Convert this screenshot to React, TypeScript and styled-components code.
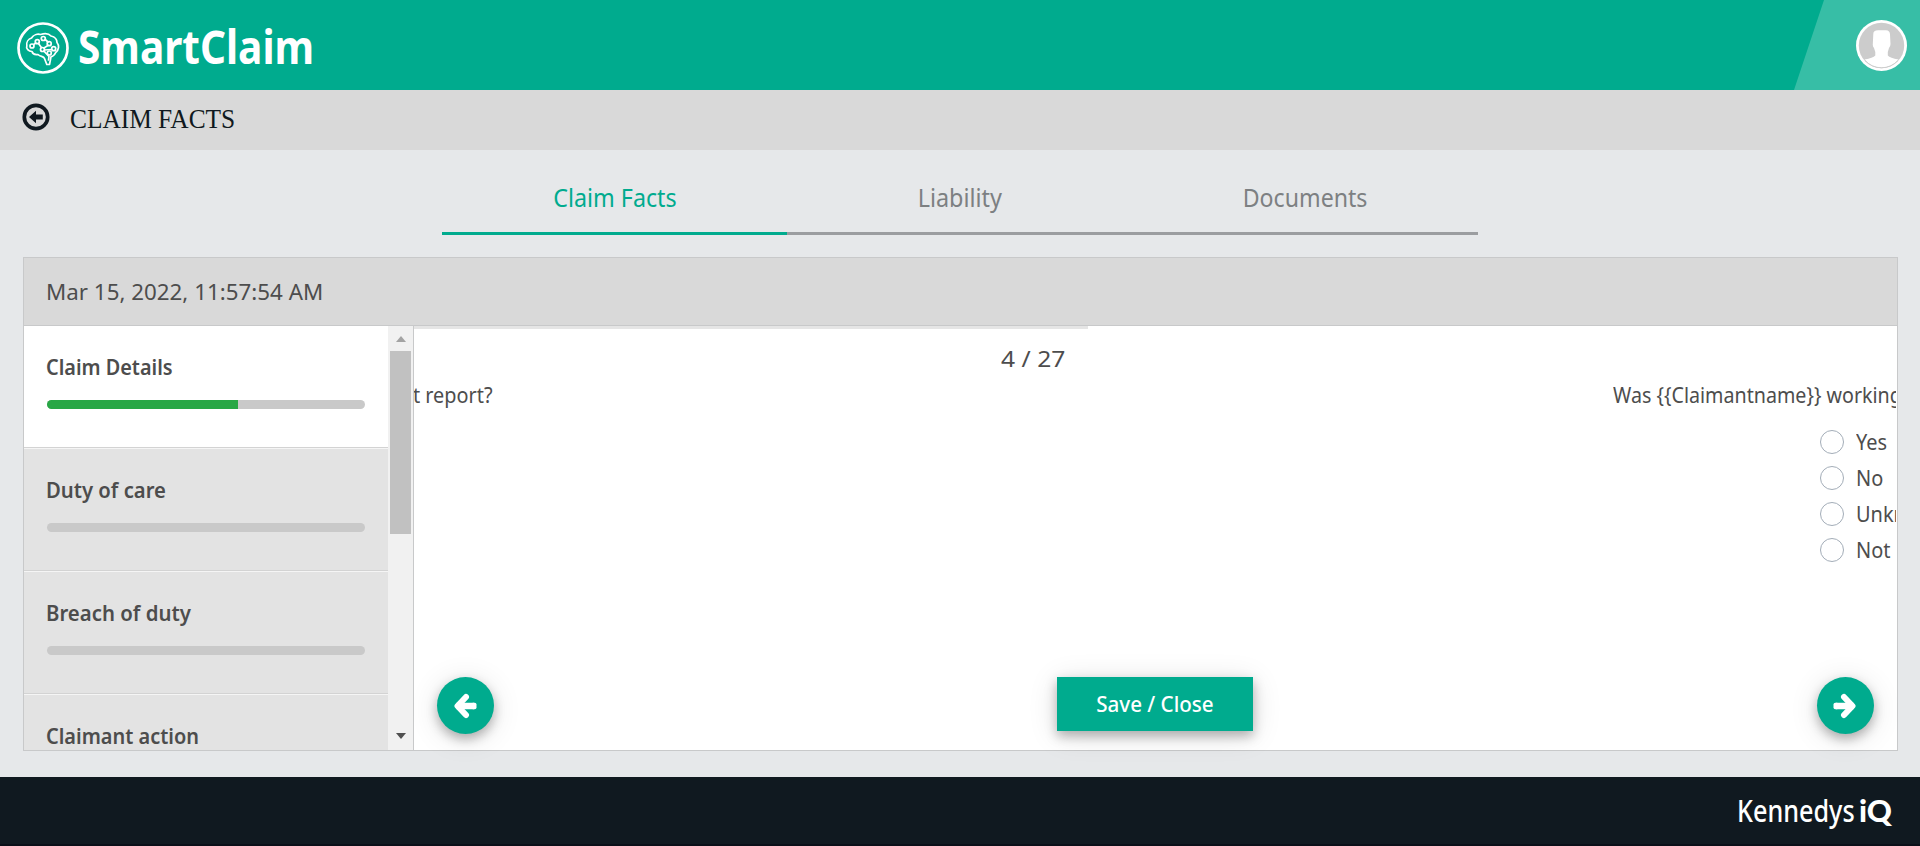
import React from 'react';
import styled, { createGlobalStyle, css } from 'styled-components';

const GREEN = '#00ab8e';
const SANS = '"Noto Sans", "Open Sans", sans-serif';

const GlobalStyle = createGlobalStyle`
  * { box-sizing: border-box; }
  body { margin: 0; background: #e6e8ea; font-family: ${SANS}; color: #4d4d4d; overflow: hidden; }
`;

const Page = styled.div`
  height: 846px;
  display: flex;
  flex-direction: column;
`;

/* Text set slightly narrower or wider than the face's natural width */
const Narrow = styled.span<{ $x: number; $from?: string }>`
  display: inline-block;
  white-space: pre;
  transform: scaleX(${(p) => p.$x});
  transform-origin: ${(p) => p.$from ?? 'left'} center;
`;

const Header = styled.header`
  height: 90px;
  flex: none;
  display: flex;
  justify-content: space-between;
  background: ${GREEN};
`;

const Brand = styled.div`
  display: flex;
  align-items: center;
  padding: 4px 0 0 16px;
  gap: 8px;
  color: #fff;
  svg { flex: none; margin-top: 2px; }
`;

const BrandName = styled.div`
  font-size: 46px;
  font-weight: 700;
  line-height: 60px;
  height: 60px;
  margin-top: -2px;
`;

const UserCorner = styled.div`
  width: 126px;
  display: flex;
  justify-content: flex-end;
  padding: 20px 13px 0 0;
  background: #37bea6;
  clip-path: polygon(30px 0, 100% 0, 100% 100%, 0 100%);
`;

const TitleBar = styled.div`
  height: 60px;
  flex: none;
  display: flex;
  align-items: center;
  padding: 0 22px;
  gap: 20px;
  background: #d9d9d9;
  color: #101920;
  svg { margin-top: -6px; }
`;

const Title = styled.h1`
  margin: -3px 0 0;
  font: 400 27px/40px "Liberation Serif", serif;
`;

const Tabs = styled.nav`
  display: flex;
  width: 1036px;
  height: 85px;
  flex: none;
  margin-left: 442px;
`;

const Tab = styled.div<{ $active?: boolean }>`
  flex: 1;
  text-align: center;
  padding-top: 27px;
  font-size: 26px;
  line-height: 40px;
  color: ${(p) => (p.$active ? GREEN : '#7d8082')};
  border-bottom: 3px solid ${(p) => (p.$active ? GREEN : '#9b9da0')};
`;

const Panel = styled.main`
  flex: none;
  height: 494px;
  margin: 22px 22px 0 23px;
  border: 1px solid #c8c9ca;
  display: flex;
  flex-direction: column;
`;

const PanelHead = styled.div`
  height: 68px;
  flex: none;
  padding-left: 22px;
  background: #d9d9d9;
  border-bottom: 1px solid #c8c9ca;
  font-size: 22px;
  line-height: 66px;
`;

const PanelBody = styled.div`
  flex: 1;
  min-height: 0;
  display: flex;
  background: #fff;
`;

const Sidebar = styled.aside`
  width: 390px;
  flex: none;
  display: flex;
  border-right: 1px solid #c8c9ca;
`;

const Sections = styled.div`
  width: 364px;
  overflow: hidden;
  background: #e3e3e3;
`;

const Section = styled.div<{ $active?: boolean }>`
  padding: 27px 23px 38px;
  border-bottom: 1px solid #d3d3d3;
  ${(p) =>
    p.$active
      ? css`background: #fff;`
      : css`border-top: 1px solid #f5f5f5;`}
`;

const SectionName = styled.div`
  font-size: 21px;
  font-weight: 600;
  line-height: 28px;
  height: 28px;
  margin: 0 0 19px -1px;
`;

const Track = styled.div`
  height: 9px;
  border-radius: 4.5px;
  background: #c9c9c9;
  overflow: hidden;
`;

const Fill = styled.div<{ $pct: number }>`
  height: 100%;
  width: ${(p) => p.$pct}%;
  background: #28a745;
`;

const ScrollBar = styled.div`
  width: 25px;
  display: flex;
  flex-direction: column;
  align-items: center;
  justify-content: space-between;
  background: #f1f1f1;
  padding: 10px 0 11px;
`;

const ScrollThumb = styled.div`
  width: 21px;
  height: 183px;
  margin: 9px 0 auto;
  background: #c1c1c1;
`;

const ScrollArrow = styled.div<{ $down?: boolean }>`
  border: 5.5px solid transparent;
  ${(p) =>
    p.$down
      ? css`border-top: 6px solid #505050; border-bottom: 0;`
      : css`border-bottom: 6px solid #a3a3a3; border-top: 0;`}
`;

const Content = styled.section`
  flex: 1;
  min-width: 0;
  display: flex;
  flex-direction: column;
`;

const Counter = styled.div`
  width: 674px;
  flex: none;
  border-top: 3px solid #e5e5e5;
  padding: 12px 23px 0 0;
  text-align: right;
  font-size: 22px;
  line-height: 34px;
  height: 53px;
`;

const Slides = styled.div`
  flex: 1;
  display: flex;
  justify-content: space-between;
  overflow: hidden;
  margin-right: 1px;
  font-size: 21px;
  line-height: 32px;
`;

const PreviousSlide = styled.div`
  margin-left: -1px;
`;

const NextSlide = styled.div`
  width: 283px;
  white-space: nowrap;
`;

const Options = styled.div`
  padding: 13px 0 0 207px;
`;

const Option = styled.label`
  display: flex;
  align-items: center;
  gap: 12px;
  height: 36px;
  line-height: 30px;
  span + span { margin-top: -1px; }
`;

const Radio = styled.span`
  width: 24px;
  height: 24px;
  flex: none;
  border: 1px solid #a3adb8;
  border-radius: 50%;
  background: #fff;
`;

const Actions = styled.div`
  height: 73px;
  flex: none;
  display: flex;
  justify-content: space-between;
  align-items: flex-start;
  padding: 0 23px;
`;

const shadow = css`
  box-shadow: 0 5px 11px rgba(0, 0, 0, 0.28), 0 4px 30px rgba(0, 0, 0, 0.12);
`;

const RoundButton = styled.button`
  width: 57px;
  height: 57px;
  padding: 0 1px 0 0;
  border: 0;
  border-radius: 50%;
  display: flex;
  align-items: center;
  justify-content: center;
  background: ${GREEN};
  ${shadow}
`;

const SaveButton = styled.button`
  width: 196px;
  height: 54px;
  margin-right: 2px;
  padding: 0 0 1px;
  border: 0;
  background: ${GREEN};
  color: #fff;
  font: 500 21px/52px ${SANS};
  ${shadow}
`;

const Footer = styled.footer`
  flex: none;
  height: 69px;
  margin-top: 26px;
  display: flex;
  justify-content: flex-end;
  background: #101920;
  border-bottom: 2px solid #0a0f18;
  color: #fff;
  padding: 12px 27px 0 0;
`;

const FooterMark = styled.div`
  display: flex;
  width: 156px;
  font-size: 30px;
  font-weight: 500;
  line-height: 44px;
  height: 44px;
`;

const FooterName = styled.div`
  width: 122px;
`;

const FooterIq = styled.div`
  font-family: Lato, sans-serif;
  font-weight: 900;
  font-size: 31px;
  line-height: 42px;
`;

const BrainLogo = () => (
  <svg width="54" height="54" viewBox="0 0 54 54" fill="none" stroke="#fff">
    <circle cx="27" cy="27" r="24.500" strokeWidth="2.700" />
    <g strokeWidth="1.700" strokeLinejoin="round" strokeLinecap="round">
      <path d="M28.500 37.500C27.500 35 24.500 36 22 33.500C18.500 34 16.500 32.500 16 30.500C12.500 30.500 9.800 27.500 10.800 25C10 21 12.500 18 15.500 17C17.500 13.700 21.500 12.700 24.500 13.500C28.500 12.300 33 12.700 35 15C39 16 41 18.500 41 21.500C43.500 24.500 43 29 39.700 31.500C38.500 34 36.800 35.500 35 35.800L33.500 43.500H30.800Z" />
      <circle cx="16" cy="25" r="2" /><circle cx="21.300" cy="20.700" r="2" /><circle cx="27.300" cy="17.500" r="2" />
      <circle cx="33.200" cy="22.700" r="2" /><circle cx="26.500" cy="28.500" r="2" /><circle cx="37.700" cy="27.700" r="2" /><circle cx="33.300" cy="32" r="2" />
      <path d="M17.600 23.700L19.700 22M22.500 22.400L25.500 26.700M29.200 18.500L32 21M32 24.400L28 27M35.800 28.500L28.500 29M28 30.200L33 35.500L32.500 39" />
    </g>
  </svg>
);

const Avatar = () => (
  <svg width="51" height="51" viewBox="0 0 51 51">
    <circle cx="25.500" cy="25.500" r="25.500" fill="#fff" />
    <circle cx="25.500" cy="25.500" r="22.700" fill="#ccc" />
    <path fill="#fff" d="M17.300 14Q17.300 10.300 22 10.300H30Q34 10.500 34 14.500L34.500 24Q34.500 26.500 33 28L31.800 32V35.500Q34 38 42.500 39.500A22 22 0 0 1 8.500 39.500Q17 38 19.300 35.500V32L18 28Q16.500 26.500 16.800 24Z" />
    <path d="M9 40.500A22.300 22.300 0 0 0 42 40.500" fill="none" stroke="#ccc" strokeWidth="0.900" />
  </svg>
);

const BackIcon = () => (
  <svg width="28" height="28" viewBox="0 0 28 28">
    <circle cx="14" cy="14" r="11.700" fill="none" stroke="#101920" strokeWidth="3.700" />
    <path fill="#101920" d="M7 14L14 7.800V11.400H20.800V16.600H14V20.200Z" />
  </svg>
);

const Arrow = ({ flip }: { flip?: boolean }) => (
  <svg width="24" height="26" viewBox="0 0 24 26" fill="none" stroke="#fff">
    <g transform={flip ? 'translate(24 0) scale(-1 1)' : undefined}>
      <path d="M3.500 13H21" strokeWidth="6.500" />
      <path d="M13 4L4.500 13L13 22" strokeWidth="6" strokeLinecap="round" strokeLinejoin="round" />
      <path d="M20 11.500H21.800V14.500H20Z" strokeWidth="3.400" strokeLinejoin="round" />
    </g>
  </svg>
);

const sections = [
  { name: 'Claim Details', pct: 60, x: 0.945 },
  { name: 'Duty of care', pct: 0, x: 0.965 },
  { name: 'Breach of duty', pct: 0, x: 0.97 },
  { name: 'Claimant action', pct: 0, x: 0.95 },
];

const options = ['Yes', 'No', 'Unknown', 'Not'];

export default function App() {
  return (
    <Page>
      <GlobalStyle />
      <Header>
        <Brand>
          <BrainLogo />
          <BrandName><Narrow $x={0.882}>SmartClaim</Narrow></BrandName>
        </Brand>
        <UserCorner><Avatar /></UserCorner>
      </Header>
      <TitleBar>
        <BackIcon />
        <Title><Narrow $x={0.94}>CLAIM FACTS</Narrow></Title>
      </TitleBar>
      <Tabs>
        <Tab $active><Narrow $x={0.895} $from="center">Claim Facts</Narrow></Tab>
        <Tab><Narrow $x={0.9} $from="center">Liability</Narrow></Tab>
        <Tab><Narrow $x={0.89} $from="center">Documents</Narrow></Tab>
      </Tabs>
      <Panel>
        <PanelHead><Narrow $x={1.016}>Mar 15, 2022, 11:57:54 AM</Narrow></PanelHead>
        <PanelBody>
          <Sidebar>
            <Sections>
              {sections.map((s, i) => (
                <Section key={s.name} $active={i === 0}>
                  <SectionName><Narrow $x={s.x}>{s.name}</Narrow></SectionName>
                  <Track><Fill $pct={s.pct} /></Track>
                </Section>
              ))}
            </Sections>
            <ScrollBar>
              <ScrollArrow />
              <ScrollThumb />
              <ScrollArrow $down />
            </ScrollBar>
          </Sidebar>
          <Content>
            <Counter><Narrow $x={1.12} $from="right">4 / 27</Narrow></Counter>
            <Slides>
              <PreviousSlide><Narrow $x={0.945}>t report?</Narrow></PreviousSlide>
              <NextSlide>
                <Narrow $x={0.937}>{'Was {{Claimantname}} working'}</Narrow>
                <Options>
                  {options.map((o) => (
                    <Option key={o}><Radio /><Narrow $x={0.95}>{o}</Narrow></Option>
                  ))}
                </Options>
              </NextSlide>
            </Slides>
            <Actions>
              <RoundButton aria-label="Previous"><Arrow /></RoundButton>
              <SaveButton><Narrow $x={0.98} $from="center">Save / Close</Narrow></SaveButton>
              <RoundButton aria-label="Next"><Arrow flip /></RoundButton>
            </Actions>
          </Content>
        </PanelBody>
      </Panel>
      <Footer>
        <FooterMark>
          <FooterName><Narrow $x={0.84}>Kennedys</Narrow></FooterName>
          <FooterIq>iQ</FooterIq>
        </FooterMark>
      </Footer>
    </Page>
  );
}
